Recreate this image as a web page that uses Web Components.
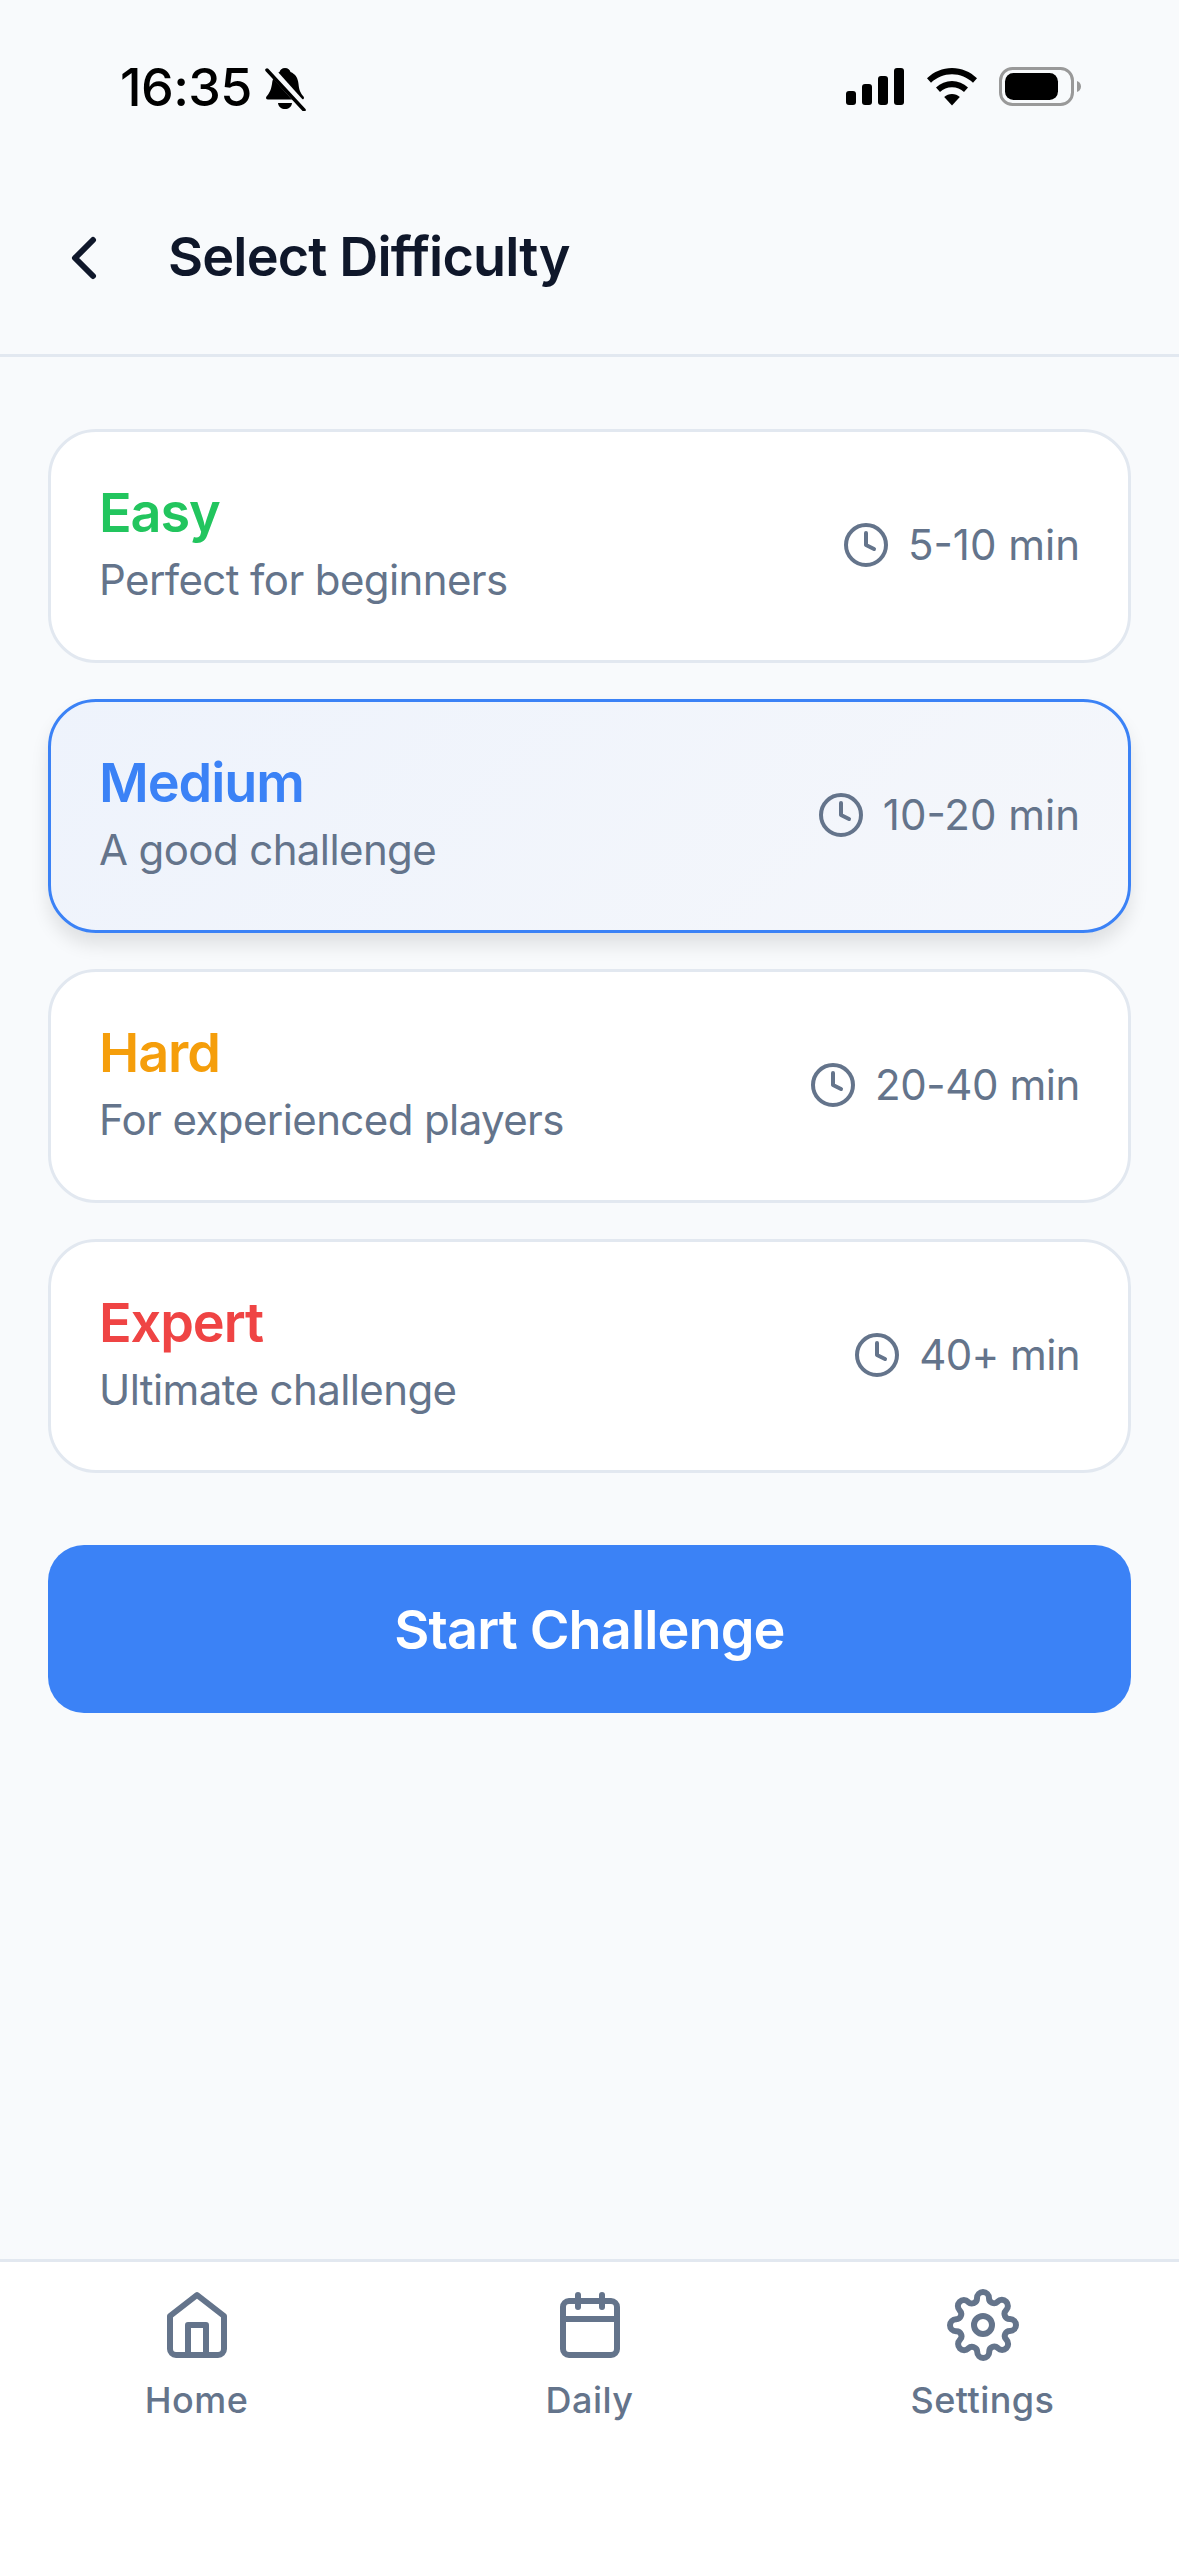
<!DOCTYPE html>
<html lang="en"><head><meta charset="utf-8"><title>Select Difficulty</title>
<style>
html,body{margin:0;padding:0;background:#f8fafc}
body{font-family:Inter,"Noto Sans",sans-serif;width:1179px;height:2556px;overflow:hidden}
</style></head>
<body>
<app-shell>
  <status-bar slot="status" time="16:35"></status-bar>
  <page-header slot="header">Select Difficulty</page-header>
  <difficulty-card level="easy" time="5-10 min" track="0"><span slot="name">Easy</span><span slot="desc">Perfect for beginners</span></difficulty-card>
  <difficulty-card level="medium" selected time="10-20 min" track="0"><span slot="name">Medium</span><span slot="desc">A good challenge</span></difficulty-card>
  <difficulty-card level="hard" time="20-40 min" track="-.4"><span slot="name">Hard</span><span slot="desc">For experienced players</span></difficulty-card>
  <difficulty-card level="expert" time="40+ min" track="-.6"><span slot="name">Expert</span><span slot="desc">Ultimate challenge</span></difficulty-card>
  <start-button>Start Challenge</start-button>
  <bottom-nav slot="nav">
    <nav-item icon="home">Home</nav-item>
    <nav-item icon="calendar">Daily</nav-item>
    <nav-item icon="settings">Settings</nav-item>
  </bottom-nav>
</app-shell>
<script>
const ICONS={
 home:'<path d="M3 9l9-7 9 7v11a2 2 0 0 1-2 2H5a2 2 0 0 1-2-2z"/><polyline points="9 22 9 12 15 12 15 22"/>',
 calendar:'<rect x="3" y="4" width="18" height="18" rx="2" ry="2"/><line x1="16" y1="2" x2="16" y2="6"/><line x1="8" y1="2" x2="8" y2="6"/><line x1="3" y1="10" x2="21" y2="10"/>',
 settings:'<circle cx="12" cy="12" r="3"/><path d="M19.4 15a1.65 1.65 0 0 0 .33 1.82l.06.06a2 2 0 0 1 0 2.83 2 2 0 0 1-2.83 0l-.06-.06a1.65 1.65 0 0 0-1.82-.33 1.65 1.65 0 0 0-1 1.51V21a2 2 0 0 1-2 2 2 2 0 0 1-2-2v-.09A1.65 1.65 0 0 0 9 19.4a1.65 1.65 0 0 0-1.82.33l-.06.06a2 2 0 0 1-2.83 0 2 2 0 0 1 0-2.83l.06-.06a1.65 1.65 0 0 0 .33-1.82 1.65 1.65 0 0 0-1.51-1H3a2 2 0 0 1-2-2 2 2 0 0 1 2-2h.09A1.65 1.65 0 0 0 4.6 9a1.65 1.65 0 0 0-.33-1.82l-.06-.06a2 2 0 0 1 0-2.83 2 2 0 0 1 2.83 0l.06.06a1.65 1.65 0 0 0 1.82.33H9a1.65 1.65 0 0 0 1-1.51V3a2 2 0 0 1 2-2 2 2 0 0 1 2 2v.09a1.65 1.65 0 0 0 1 1.51 1.65 1.65 0 0 0 1.82-.33l.06-.06a2 2 0 0 1 2.83 0 2 2 0 0 1 0 2.83l-.06.06a1.65 1.65 0 0 0-.33 1.82V9a1.65 1.65 0 0 0 1.51 1H21a2 2 0 0 1 2 2 2 2 0 0 1-2 2h-.09a1.65 1.65 0 0 0-1.51 1z"/>',
 clock:'<circle cx="12" cy="12" r="10"/><polyline points="12 6 12 12 16 14"/>',
 back:'<polyline points="15 18 9 12 15 6"/>'
};
const svg=(n,s,c)=>`<svg xmlns="http://www.w3.org/2000/svg" width="${s}" height="${s}" viewBox="0 0 24 24" fill="none" stroke="${c}" stroke-width="2" stroke-linecap="round" stroke-linejoin="round" style="display:block;flex:none">${ICONS[n]}</svg>`;
function def(name,render){customElements.define(name,class extends HTMLElement{constructor(){super();this.attachShadow({mode:'open'})}connectedCallback(){this.shadowRoot.innerHTML=render(this)}})}

def('app-shell',()=>`<style>
:host{display:flex;flex-direction:column;width:1179px;height:2556px;background:#f8fafc}
main{display:flex;flex-direction:column;gap:36px;padding:72px 48px 0;flex:1}
</style><slot name="status"></slot><slot name="header"></slot><main><slot></slot></main><slot name="nav"></slot>`);

def('status-bar',h=>`<style>
:host{display:flex;align-items:flex-start;justify-content:space-between;height:162px;box-sizing:border-box;padding:60px 98px 0 120px;color:#000}
.l{display:flex;align-items:flex-start;gap:13px}
.t{font:500 52px/56px Inter,sans-serif;letter-spacing:-.6px}
.r{display:flex;align-items:flex-start;gap:22px;padding-top:8px}
</style>
<div class="l"><span class="t">${h.getAttribute('time')}</span>
<svg width="41" height="44" viewBox="0 0 41 44" style="margin-top:7px"><path d="M20 1c3 0 5 2 5.500 4 5 2 7.500 6 8 12 .5 6 2 9 5 12.500 1 1.500 .5 3-1.500 3H3c-2 0-2.500-1.500-1.500-3C4.500 26 6 23 7 17c.5-6 3-10 7.500-12C15 3 17 1 20 1z" fill="#000"/><path d="M13 36h14c-.5 4-3.500 6-7 6s-6.500-2-7-6z" fill="#000"/><path d="M4 1l36 40" stroke="#f8fafc" stroke-width="8"/><path d="M2 3l37 40" stroke="#000" stroke-width="3.500" stroke-linecap="round"/></svg></div>
<div class="r">
<svg width="58" height="38" viewBox="0 0 58 38"><rect x="0" y="23" width="10" height="14" rx="3"/><rect x="16" y="16" width="10" height="21" rx="3"/><rect x="32" y="8" width="10" height="29" rx="3"/><rect x="48" y="0" width="10" height="37" rx="3"/></svg>
<svg width="50" height="38" viewBox="0 0 50 38" style="margin-left:1px"><path d="M25 0c9.500 0 18 3.600 25 10.300l-4 4.400C40.300 9.300 33 6.200 25 6.200S9.700 9.300 4 14.700L0 10.300C7 3.600 15.500 0 25 0z"/><path d="M25 13c6 0 11.500 2.300 16 6.500l-4 4.400c-3.200-3-7.300-4.700-12-4.700s-8.800 1.700-12 4.700l-4-4.400C13.500 15.300 19 13 25 13z"/><path d="M25 26c3 0 5.700 1.100 7.800 3L25 37.500 17.200 29c2.100-1.900 4.800-3 7.800-3z"/></svg>
<svg width="82" height="39" viewBox="0 0 82 39" style="margin-top:-1px"><rect x="1.500" y="1.500" width="72" height="36" rx="12" fill="none" stroke="#999" stroke-width="3"/><rect x="6" y="6" width="53" height="27" rx="8.500"/><path d="M78 14c2 .5 4 2.500 4 5.500s-2 5-4 5.500z" fill="#999"/></svg>
</div>`);

def('page-header',()=>`<style>
:host{display:flex;align-items:center;gap:48px;box-sizing:border-box;height:195px;padding:0 48px;border-bottom:3px solid #e2e8f0;font:600 54px/72px Inter,sans-serif;color:#0f172a;letter-spacing:-.85px}
span{display:block;margin-top:-3px}
</style>${svg('back',72,'#0f172a')}<span><slot></slot></span>`);

const LV={easy:'#22c55e',medium:'#3b82f6',hard:'#f59e0b',expert:'#ef4444'};
def('difficulty-card',h=>{const sel=h.hasAttribute('selected');return `<style>
:host{display:flex;align-items:center;justify-content:space-between;box-sizing:border-box;height:234px;padding:0 48px;border-radius:48px;
border:3px solid ${sel?'#3b82f6':'#e2e8f0'};background:${sel?'linear-gradient(135deg,#eef3fc,#f5f7fb)':'#fff'};${sel?'box-shadow:0 12px 18px rgba(0,0,0,.1);':''}}
.b{padding-bottom:3px}
.n{font:600 54px/66px Inter,sans-serif;letter-spacing:-1.1px;color:${LV[h.getAttribute('level')]};display:block}
.d{font:400 42px/60px Inter,sans-serif;letter-spacing:-.6px;color:#64748b;display:block;margin-top:4px}
.t{display:flex;align-items:center;gap:18px;font:400 42px/60px Inter,sans-serif;color:#64748b;padding-bottom:2px;letter-spacing:${h.getAttribute('track')}px}
</style><div class="b"><span class="n"><slot name="name"></slot></span><span class="d"><slot name="desc"></slot></span></div><div class="t">${svg('clock',48,'#64748b')}<span>${h.getAttribute('time')}</span></div>`});

def('start-button',()=>`<style>
:host{display:flex;align-items:center;justify-content:center;height:168px;box-sizing:border-box;padding-top:2px;margin-top:36px;border-radius:36px;background:#3b82f6;color:#fff;font:600 54px/72px Inter,sans-serif;letter-spacing:-.87px}
</style><slot></slot>`);

def('bottom-nav',()=>`<style>
:host{display:grid;grid-template-columns:repeat(3,393px);align-content:start;box-sizing:border-box;height:297px;padding-top:27px;background:#fff;border-top:3px solid #e2e8f0}
</style><slot></slot>`);

def('nav-item',h=>`<style>
:host{display:flex;flex-direction:column;align-items:center;gap:15px;font:450 36px/48px Inter,sans-serif;letter-spacing:.45px;color:#64748b}
</style>${svg(h.getAttribute('icon'),72,'#64748b')}<slot></slot>`);
</script>
</body></html>
